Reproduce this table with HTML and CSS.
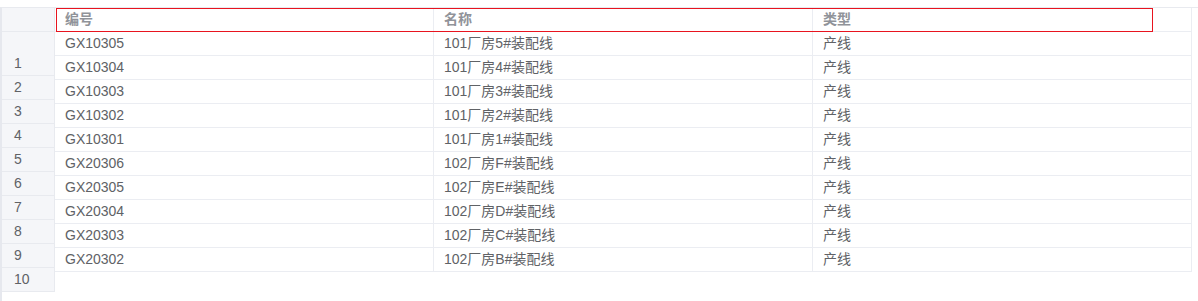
FILE: index.html
```html
<!DOCTYPE html>
<html lang="zh">
<head>
<meta charset="utf-8">
<title>产线列表</title>
<link rel="stylesheet" href="styles.css">
</head>
<body>
<div class="sheet">
  <div class="gutter">
    <div class="g-cell g-head"></div>
    <div class="g-cell g-first">1</div>
    <div class="g-cell">2</div>
    <div class="g-cell">3</div>
    <div class="g-cell">4</div>
    <div class="g-cell">5</div>
    <div class="g-cell">6</div>
    <div class="g-cell">7</div>
    <div class="g-cell">8</div>
    <div class="g-cell">9</div>
    <div class="g-cell">10</div>
  </div>
  <div class="grid">
    <div class="row head">
      <div class="cell">编号</div>
      <div class="cell">名称</div>
      <div class="cell">类型</div>
      <div class="select-box"></div>
    </div>
    <div class="row"><div class="cell">GX10305</div><div class="cell">101厂房5#装配线</div><div class="cell">产线</div></div>
    <div class="row"><div class="cell">GX10304</div><div class="cell">101厂房4#装配线</div><div class="cell">产线</div></div>
    <div class="row"><div class="cell">GX10303</div><div class="cell">101厂房3#装配线</div><div class="cell">产线</div></div>
    <div class="row"><div class="cell">GX10302</div><div class="cell">101厂房2#装配线</div><div class="cell">产线</div></div>
    <div class="row"><div class="cell">GX10301</div><div class="cell">101厂房1#装配线</div><div class="cell">产线</div></div>
    <div class="row"><div class="cell">GX20306</div><div class="cell">102厂房F#装配线</div><div class="cell">产线</div></div>
    <div class="row"><div class="cell">GX20305</div><div class="cell">102厂房E#装配线</div><div class="cell">产线</div></div>
    <div class="row"><div class="cell">GX20304</div><div class="cell">102厂房D#装配线</div><div class="cell">产线</div></div>
    <div class="row"><div class="cell">GX20303</div><div class="cell">102厂房C#装配线</div><div class="cell">产线</div></div>
    <div class="row"><div class="cell">GX20302</div><div class="cell">102厂房B#装配线</div><div class="cell">产线</div></div>
  </div>
</div>
</body>
</html>
```

FILE: styles.css
```css
html, body {
  margin: 0;
  padding: 0;
  background: #ffffff;
}

body {
  font-family: "Liberation Sans", "Noto Sans CJK SC", sans-serif;
  font-size: 14px;
  color: #606266;
  height: 301px;
  overflow: hidden;
}

.sheet {
  display: flex;
  align-items: flex-start;
  margin-top: 7px;
  border-top: 1px solid #e8eaef;
  border-left: 2px solid #e6e8ee;
  height: 300px;
}

.gutter {
  width: 52px;
  border-right: 1px solid #e8eaef;
  display: flex;
  flex-direction: column;
}

.g-cell {
  height: 23px;
  line-height: 23px;
  background: #f5f6f9;
  border-bottom: 1px solid #e8eaef;
  padding-left: 12px;
  color: #606266;
}

.g-first {
  height: 23px;
  padding-top: 20px;
}

.grid {
  width: 1137px;
  display: flex;
  flex-direction: column;
}

.row {
  display: grid;
  grid-template-columns: 379px 379px 379px;
  border-bottom: 1px solid #ebedf2;
  position: relative;
}

.cell {
  height: 23px;
  line-height: 23px;
  padding-left: 10px;
  border-right: 1px solid #ebedf2;
  white-space: nowrap;
}

.row .cell:first-child {
  padding-left: 10px;
}

.head .cell {
  color: #909399;
  font-weight: bold;
}

.select-box {
  position: absolute;
  left: 1px;
  top: 0;
  width: 1095px;
  height: 22px;
  border: 1px solid #e8141f;
}
```
